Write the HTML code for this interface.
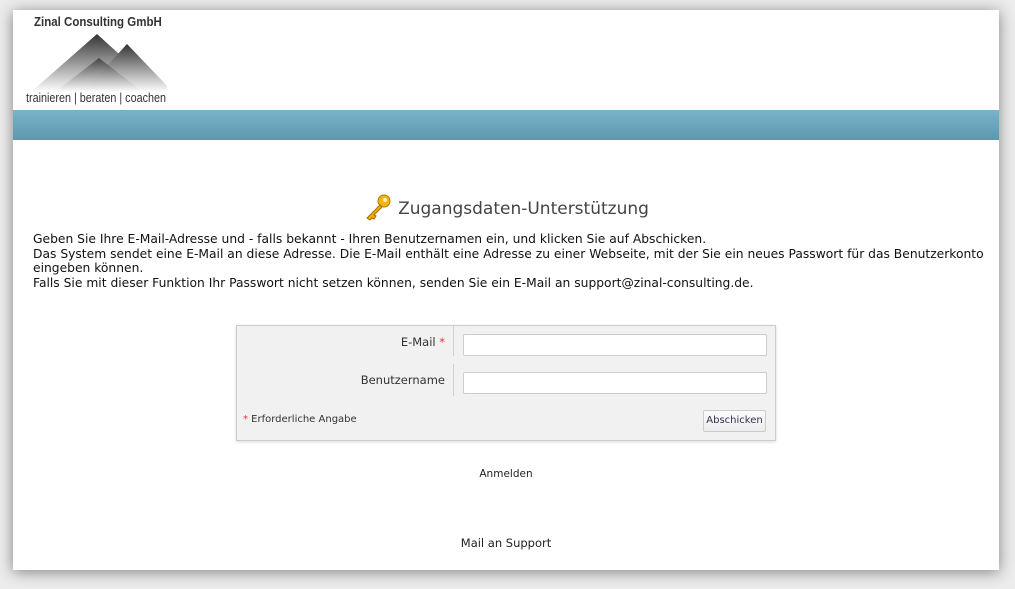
<!DOCTYPE html>
<html><head><meta charset="utf-8"><style>
html,body{margin:0;padding:0;width:1015px;height:589px;overflow:hidden;background:#ececec;font-family:"DejaVu Sans","Liberation Sans",sans-serif;}
#page{position:absolute;left:13px;top:10px;width:986px;height:560px;background:#fff;box-shadow:0 2px 14px rgba(0,0,0,.45);}
#banner{position:absolute;left:0;top:100px;width:986px;height:30px;background:linear-gradient(#7ab3c9,#5d98ae);}
.logo1{position:absolute;left:21px;top:5px;font:bold 12.5px "Liberation Sans",sans-serif;color:#333;transform:scaleX(.92);transform-origin:left;white-space:nowrap;}
.logo2{position:absolute;left:13px;top:80px;font:13px "Liberation Sans",sans-serif;color:#333;transform:scaleX(.83);transform-origin:left;white-space:nowrap;}
h1{position:absolute;left:0;width:986px;top:183px;margin:0;text-align:center;font-weight:normal;font-size:17px;color:#444;}
.txt{position:absolute;left:20px;top:222px;font-size:12.3px;line-height:14.7px;color:#111;width:960px;}
#form{position:absolute;left:223px;top:315px;width:538px;height:114px;background:#f1f1f1;border:1px solid #ccc;box-shadow:0 1px 3px rgba(0,0,0,.15);font-size:11.5px;color:#333;}
.lab{position:absolute;right:330px;text-align:right;}
.sep{position:absolute;left:216px;width:1px;background:#d0d0d0;}
.inp{position:absolute;left:226px;width:302px;height:20px;background:#fff;border:1px solid #ccc;border-radius:2px;}
.btn{position:absolute;left:466px;top:84px;width:61px;height:20px;border:1px solid #ccc;background:linear-gradient(#fbfbfb,#ececec);border-radius:2px;font-size:10px;text-align:center;line-height:20px;color:#335;}
.star{color:#e33;}
.link{position:absolute;left:0;width:986px;text-align:center;font-size:10.5px;color:#222;}
</style></head><body>
<div id="page">
<div class="logo1">Zinal Consulting GmbH</div>
<svg style="position:absolute;left:14px;top:22px" width="140" height="60">
<defs><linearGradient id="g" x1="0" y1="0" x2="0" y2="1"><stop offset="0" stop-color="#333"/><stop offset="1" stop-color="#fff"/></linearGradient></defs>
<polygon points="70,2 134,60 4,60" fill="url(#g)"/>
<polygon points="100,12 146,60 56,60" fill="url(#g)"/>
<polygon points="72,26 116,60 28,60" fill="url(#g)" opacity=".8"/>
</svg>
<div class="logo2">trainieren | beraten | coachen</div>
<div id="banner"></div>
<h1><svg width="30" height="28" viewBox="0 0 30 28" style="vertical-align:-7px;margin-right:5px"><circle cx="21" cy="8" r="6" fill="#f3b416" stroke="#b57a00"/><circle cx="22" cy="7" r="2" fill="#fff3b0"/><path d="M17 12 L4 25 L7 27 L9 25 L11 26 L13 23 L11 22 L19 14Z" fill="#f1b000" stroke="#a66d00" stroke-width="1"/></svg>Zugangsdaten-Unterstützung</h1>
<div class="txt">Geben Sie Ihre E-Mail-Adresse und - falls bekannt - Ihren Benutzernamen ein, und klicken Sie auf Abschicken.<br>Das System sendet eine E-Mail an diese Adresse. Die E-Mail enthält eine Adresse zu einer Webseite, mit der Sie ein neues Passwort für das Benutzerkonto eingeben können.<br>Falls Sie mit dieser Funktion Ihr Passwort nicht setzen können, senden Sie ein E-Mail an support@zinal-consulting.de.</div>
<div id="form">
<div class="lab" style="top:9px">E-Mail <span class="star">*</span></div>
<div class="lab" style="top:47px">Benutzername</div>
<div class="sep" style="top:0;height:30px"></div>
<div class="sep" style="top:38px;height:32px"></div>
<div class="inp" style="top:8px"></div>
<div class="inp" style="top:46px"></div>
<div style="position:absolute;left:6px;top:88px;font-size:10px"><span class="star">*</span> Erforderliche Angabe</div>
<div class="btn">Abschicken</div>
</div>
<div class="link" style="top:458px">Anmelden</div>
<div class="link" style="top:526px;font-size:11.5px">Mail an Support</div>
</div>
</body></html>
